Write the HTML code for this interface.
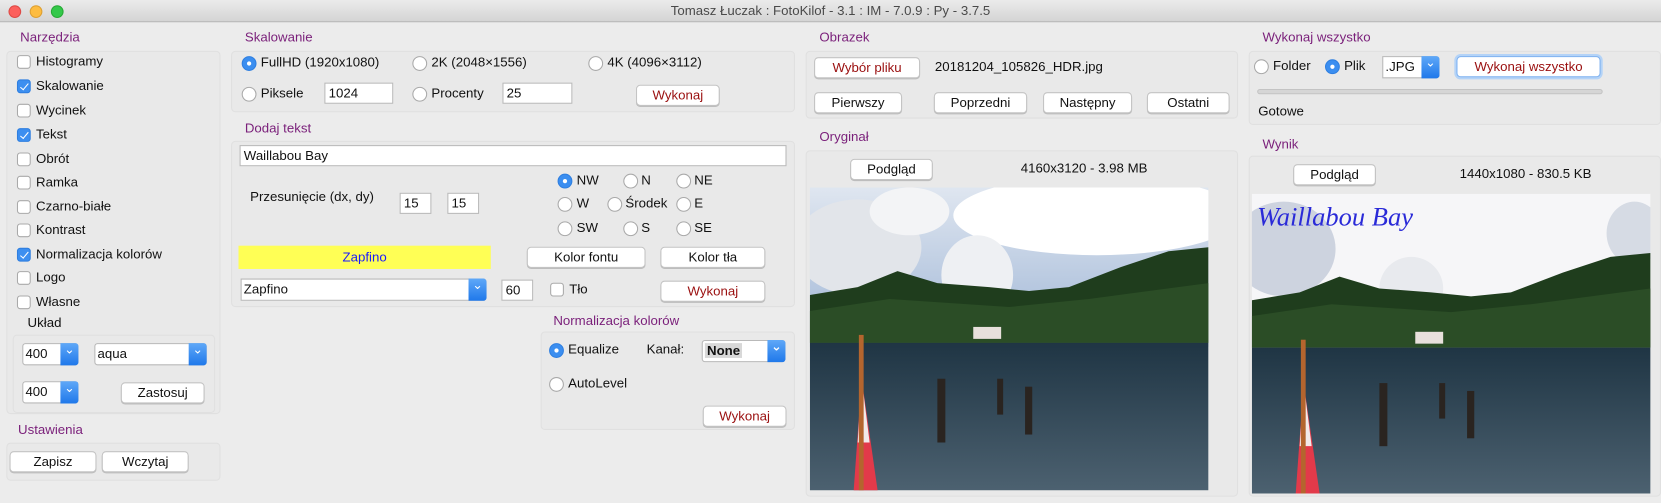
<!DOCTYPE html>
<html><head><meta charset="utf-8"><style>
*{box-sizing:border-box;margin:0;padding:0}
html,body{width:1661px;height:503px;overflow:hidden;background:#ececec}
#w{position:absolute;left:0;top:0;width:1567px;height:475px;transform:scale(1.06,1.059);transform-origin:0 0;font-family:"Liberation Sans","DejaVu Sans",sans-serif;font-size:12.5px;color:#111}
.a{position:absolute;white-space:nowrap}
.tb{position:absolute;left:0;top:0;width:1567px;height:21px;background:linear-gradient(#ebebeb,#d4d4d4);border-bottom:1px solid #b5b5b5;text-align:center;line-height:21px;color:#4a4a4a;font-size:12.5px}
.dot{position:absolute;top:5px;width:12px;height:12px;border-radius:50%}
.box{position:absolute;border:1px solid #e0e0e0;background:#e9e9e9;border-radius:4px}
.lab{position:absolute;color:#7a1f7a;white-space:nowrap}
.btn{position:absolute;height:20px;background:#fff;border:1px solid #c4c4c4;border-radius:4px;text-align:center;line-height:18px;box-shadow:0 1px 0 #bdbdbd}
.red{color:#9a0f0f}
.cb{position:absolute;width:13px;height:13px;border:1px solid #aaa;border-radius:3px;background:#fff}
.cb.on{background:#3d8ff0;border-color:#2f7fe0}
.cb.on::after{content:"";position:absolute;left:4px;top:1px;width:3px;height:7px;border:solid #fff;border-width:0 1.6px 1.6px 0;transform:rotate(40deg)}
.rb{position:absolute;width:14px;height:14px;border:1px solid #a9a9a9;border-radius:50%;background:#fff}
.rb.on{background:#3b8ef0;border-color:#2f7fe0}
.rb.on::after{content:"";position:absolute;left:4px;top:4px;width:4px;height:4px;border-radius:50%;background:#fff}
.ent{position:absolute;height:20px;background:#fff;border:1px solid #b9b9b9;line-height:18px;padding-left:3px}
.cmb{position:absolute;height:21px;background:#fff;border:1px solid #b9b9b9;line-height:19px;padding-left:2px;border-radius:3px}
.cmb::after{content:"⌄";position:absolute;right:-1px;top:-1px;width:17px;height:21px;background:linear-gradient(#5fa8f8,#1f78ea);border-radius:0 3px 3px 0;color:#fff;font-size:12px;line-height:13px;text-align:center}
</style></head><body><div id="w">
<div class="tb">Tomasz Łuczak : FotoKilof - 3.1 : IM - 7.0.9 : Py - 3.7.5</div>
<div class="dot" style="left:8px;background:#fc605c;border:1px solid #de4a45"></div>
<div class="dot" style="left:28px;background:#fdbc40;border:1px solid #dea032"></div>
<div class="dot" style="left:48px;background:#34c84a;border:1px solid #27aa35"></div>

<!-- Narzedzia -->
<div class="lab" style="left:19px;top:28px">Narzędzia</div>
<div class="box" style="left:6px;top:48px;width:202px;height:343px"></div>
<div class="cb" style="left:16px;top:52px"></div><div class="a" style="left:34px;top:51px">Histogramy</div>
<div class="cb on" style="left:16px;top:75px"></div><div class="a" style="left:34px;top:74px">Skalowanie</div>
<div class="cb" style="left:16px;top:98px"></div><div class="a" style="left:34px;top:97px">Wycinek</div>
<div class="cb on" style="left:16px;top:121px"></div><div class="a" style="left:34px;top:120px">Tekst</div>
<div class="cb" style="left:16px;top:144px"></div><div class="a" style="left:34px;top:143px">Obrót</div>
<div class="cb" style="left:16px;top:166px"></div><div class="a" style="left:34px;top:165px">Ramka</div>
<div class="cb" style="left:16px;top:189px"></div><div class="a" style="left:34px;top:188px">Czarno-białe</div>
<div class="cb" style="left:16px;top:211px"></div><div class="a" style="left:34px;top:210px">Kontrast</div>
<div class="cb on" style="left:16px;top:234px"></div><div class="a" style="left:34px;top:233px">Normalizacja kolorów</div>
<div class="cb" style="left:16px;top:256px"></div><div class="a" style="left:34px;top:255px">Logo</div>
<div class="cb" style="left:16px;top:279px"></div><div class="a" style="left:34px;top:278px">Własne</div>
<div class="a" style="left:26px;top:298px">Układ</div>
<div class="box" style="left:12px;top:316px;width:191px;height:74px"></div>
<div class="cmb" style="left:21px;top:324px;width:53px">400</div>
<div class="cmb" style="left:89px;top:324px;width:106px">aqua</div>
<div class="cmb" style="left:21px;top:360px;width:53px">400</div>
<div class="btn" style="left:114px;top:361px;width:79px">Zastosuj</div>
<div class="lab" style="left:17px;top:399px">Ustawienia</div>
<div class="box" style="left:6px;top:418px;width:202px;height:36px"></div>
<div class="btn" style="left:9px;top:426px;width:82px">Zapisz</div>
<div class="btn" style="left:96px;top:426px;width:82px">Wczytaj</div>

<!-- Skalowanie -->
<div class="lab" style="left:231px;top:28px">Skalowanie</div>
<div class="box" style="left:218px;top:48px;width:532px;height:58px"></div>
<div class="rb on" style="left:228px;top:53px"></div><div class="a" style="left:246px;top:52px">FullHD (1920x1080)</div>
<div class="rb" style="left:389px;top:53px"></div><div class="a" style="left:407px;top:52px">2K (2048×1556)</div>
<div class="rb" style="left:555px;top:53px"></div><div class="a" style="left:573px;top:52px">4K (4096×3112)</div>
<div class="rb" style="left:228px;top:82px"></div><div class="a" style="left:246px;top:81px">Piksele</div>
<div class="ent" style="left:306px;top:78px;width:65px">1024</div>
<div class="rb" style="left:389px;top:82px"></div><div class="a" style="left:407px;top:81px">Procenty</div>
<div class="ent" style="left:474px;top:78px;width:66px">25</div>
<div class="btn red" style="left:600px;top:80px;width:79px">Wykonaj</div>

<!-- Dodaj tekst -->
<div class="lab" style="left:231px;top:114px">Dodaj tekst</div>
<div class="box" style="left:218px;top:133px;width:532px;height:157px"></div>
<div class="ent" style="left:226px;top:137px;width:516px">Waillabou Bay</div>
<div class="a" style="left:236px;top:179px">Przesunięcie (dx, dy)</div>
<div class="ent" style="left:377px;top:182px;width:30px">15</div>
<div class="ent" style="left:422px;top:182px;width:30px">15</div>
<div class="rb on" style="left:526px;top:164px"></div><div class="a" style="left:544px;top:163px">NW</div>
<div class="rb" style="left:588px;top:164px"></div><div class="a" style="left:605px;top:163px">N</div>
<div class="rb" style="left:638px;top:164px"></div><div class="a" style="left:655px;top:163px">NE</div>
<div class="rb" style="left:526px;top:186px"></div><div class="a" style="left:544px;top:185px">W</div>
<div class="rb" style="left:573px;top:186px"></div><div class="a" style="left:590px;top:185px">Środek</div>
<div class="rb" style="left:638px;top:186px"></div><div class="a" style="left:655px;top:185px">E</div>
<div class="rb" style="left:526px;top:209px"></div><div class="a" style="left:544px;top:208px">SW</div>
<div class="rb" style="left:588px;top:209px"></div><div class="a" style="left:605px;top:208px">S</div>
<div class="rb" style="left:638px;top:209px"></div><div class="a" style="left:655px;top:208px">SE</div>
<div class="a" style="left:225px;top:232px;width:238px;height:22px;background:#ffff55;color:#1a1aff;text-align:center;line-height:22px">Zapfino</div>
<div class="btn" style="left:497px;top:233px;width:112px">Kolor fontu</div>
<div class="btn" style="left:623px;top:233px;width:99px">Kolor tła</div>
<div class="cmb" style="left:227px;top:263px;width:232px;border-radius:0 3px 3px 0">Zapfino</div>
<div class="ent" style="left:473px;top:264px;width:30px">60</div>
<div class="cb" style="left:519px;top:267px"></div><div class="a" style="left:537px;top:266px">Tło</div>
<div class="btn red" style="left:623px;top:265px;width:99px">Wykonaj</div>

<!-- Normalizacja -->
<div class="lab" style="left:522px;top:296px">Normalizacja kolorów</div>
<div class="box" style="left:510px;top:313px;width:240px;height:93px"></div>
<div class="rb on" style="left:518px;top:324px"></div><div class="a" style="left:536px;top:323px">Equalize</div>
<div class="a" style="left:610px;top:323px">Kanał:</div>
<div class="cmb" style="left:662px;top:321px;width:79px;font-weight:bold;background:#fff"><span style="background:#d8d8d8;padding:0 2px">None</span></div>
<div class="rb" style="left:518px;top:356px"></div><div class="a" style="left:536px;top:355px">AutoLevel</div>
<div class="btn red" style="left:663px;top:383px;width:79px">Wykonaj</div>

<!-- Obrazek -->
<div class="lab" style="left:773px;top:28px">Obrazek</div>
<div class="box" style="left:760px;top:48px;width:408px;height:64px"></div>
<div class="btn red" style="left:768px;top:54px;width:100px">Wybór pliku</div>
<div class="a" style="left:882px;top:56px">20181204_105826_HDR.jpg</div>
<div class="btn" style="left:768px;top:87px;width:83px">Pierwszy</div>
<div class="btn" style="left:881px;top:87px;width:88px">Poprzedni</div>
<div class="btn" style="left:984px;top:87px;width:84px">Następny</div>
<div class="btn" style="left:1082px;top:87px;width:78px">Ostatni</div>
<div class="lab" style="left:773px;top:122px">Oryginał</div>
<div class="box" style="left:760px;top:142px;width:408px;height:327px"></div>
<div class="btn" style="left:802px;top:150px;width:78px">Podgląd</div>
<div class="a" style="left:963px;top:152px">4160x3120 - 3.98 MB</div>

<!-- Wykonaj wszystko -->
<div class="lab" style="left:1191px;top:28px">Wykonaj wszystko</div>
<div class="box" style="left:1178px;top:48px;width:389px;height:70px"></div>
<div class="rb" style="left:1183px;top:56px"></div><div class="a" style="left:1201px;top:55px">Folder</div>
<div class="rb on" style="left:1250px;top:56px"></div><div class="a" style="left:1268px;top:55px">Plik</div>
<div class="cmb" style="left:1304px;top:53px;width:54px;border-radius:0 3px 3px 0">.JPG</div>
<div class="btn red" style="left:1374px;top:53px;width:136px;border:1px solid #7fb2f0;box-shadow:0 0 0 2px #b4d3f7">Wykonaj wszystko</div>
<div class="a" style="left:1186px;top:84px;width:326px;height:5px;border-radius:3px;background:#d6d6d6;border:1px solid #c3c3c3"></div>
<div class="a" style="left:1187px;top:98px">Gotowe</div>
<div class="lab" style="left:1191px;top:129px">Wynik</div>
<div class="box" style="left:1178px;top:147px;width:389px;height:322px"></div>
<div class="btn" style="left:1220px;top:155px;width:78px">Podgląd</div>
<div class="a" style="left:1377px;top:157px">1440x1080 - 830.5 KB</div>

<!-- photos -->
<svg class="a" style="left:764px;top:177px" width="376" height="286" viewBox="0 0 100 76" preserveAspectRatio="none">
<defs><linearGradient id="sk" x1="0" y1="0" x2="0" y2="1"><stop offset="0" stop-color="#dfe6f0"/><stop offset="1" stop-color="#9fb6d6"/></linearGradient>
<linearGradient id="wt" x1="0" y1="0" x2="0" y2="1"><stop offset="0" stop-color="#1f3544"/><stop offset="1" stop-color="#4c6170"/></linearGradient></defs>
<rect width="100" height="40" fill="url(#sk)"/>
<ellipse cx="12" cy="15" rx="16" ry="12" fill="#e2e5ea"/><ellipse cx="72" cy="7" rx="36" ry="10" fill="#fff"/><ellipse cx="42" cy="22" rx="9" ry="10" fill="#eef0f3"/><ellipse cx="25" cy="6" rx="10" ry="6" fill="#f3f4f6"/>
<path d="M0 27 L12 25 L22 21 L32 24 L45 25 L55 26 L65 25 L78 20 L90 16 L100 15 L100 39 L0 39Z" fill="#1f3d1d"/>
<path d="M0 31 L20 28 L50 30 L70 28 L100 24 L100 39 L0 39Z" fill="#2b4d26"/>
<rect x="41" y="35" width="7" height="3" fill="#e8e0dc"/>
<rect y="39" width="100" height="37" fill="url(#wt)"/>
<rect x="32" y="48" width="2" height="16" fill="#2a2420"/><rect x="47" y="48" width="1.5" height="9" fill="#2a2420"/><rect x="54" y="50" width="1.8" height="12" fill="#2a2420"/>
<path d="M13 48 L11 76 L17 76 Z" fill="#e23a4a"/><path d="M13 48 L15 64 L12 64Z" fill="#f2eaea"/><rect x="12.3" y="37" width="1.2" height="39" fill="#b4652e"/>
</svg>
<svg class="a" style="left:1181px;top:183px" width="376" height="283" viewBox="0 0 100 76" preserveAspectRatio="none">
<rect width="100" height="40" fill="#f6f6f8"/>
<ellipse cx="8" cy="14" rx="13" ry="12" fill="#cdd3df"/><ellipse cx="96" cy="10" rx="7" ry="8" fill="#d6dbe4"/><ellipse cx="40" cy="24" rx="8" ry="8" fill="#e8eaee"/>
<path d="M0 27 L12 25 L22 21 L32 24 L45 25 L55 26 L65 25 L78 20 L90 16 L100 15 L100 39 L0 39Z" fill="#1f3d1d"/>
<path d="M0 31 L20 28 L50 30 L70 28 L100 24 L100 39 L0 39Z" fill="#2b4d26"/>
<rect x="41" y="35" width="7" height="3" fill="#e8e0dc"/>
<rect y="39" width="100" height="37" fill="url(#wt)"/>
<rect x="32" y="48" width="2" height="16" fill="#2a2420"/><rect x="47" y="48" width="1.5" height="9" fill="#2a2420"/><rect x="54" y="50" width="1.8" height="12" fill="#2a2420"/>
<path d="M13 48 L11 76 L17 76 Z" fill="#e23a4a"/><path d="M13 48 L15 64 L12 64Z" fill="#f2eaea"/><rect x="12.3" y="37" width="1.2" height="39" fill="#b4652e"/>
</svg>
<div class="a" style="left:1186px;top:192px;font-family:'Liberation Serif',serif;font-style:italic;font-size:25px;color:#2a2ad8">Waillabou Bay</div>
</div></body></html>
